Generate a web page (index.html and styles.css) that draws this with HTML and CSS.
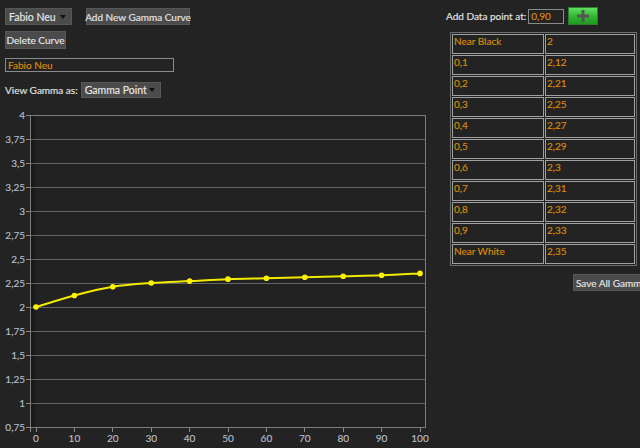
FILE: index.html
```html
<!DOCTYPE html>
<html>
<head>
<meta charset="utf-8">
<link rel="stylesheet" href="styles.css">
</head>
<body>
<div class="app">
  <div class="left">
    <div class="row row-top">
      <div class="dropdown dd-profile"><span>Fabio Neu</span><i class="arrow"></i></div>
      <div class="btn btn-add">Add New Gamma Curve</div>
    </div>
    <div class="row row-delete">
      <div class="btn btn-delete">Delete Curve</div>
    </div>
    <div class="name-input">Fabio Neu</div>
    <div class="row row-view">
      <span class="label">View Gamma as:</span>
      <div class="dropdown dd-view"><span>Gamma Point</span><i class="arrow"></i></div>
    </div>
    <svg class="chart" width="440" height="340" viewBox="0 108 440 340" xmlns="http://www.w3.org/2000/svg">
      <defs>
        <linearGradient id="shade" x1="0" x2="1" y1="0" y2="0">
          <stop offset="0" stop-color="#111" stop-opacity="0.8"/>
          <stop offset="1" stop-color="#111" stop-opacity="0"/>
        </linearGradient>
      </defs>
      <rect x="30" y="115" width="396" height="312" fill="#222"/>
      <rect x="31" y="116" width="6" height="311" fill="url(#shade)"/>
      <g class="grid">
        <line x1="31" x2="425" y1="139.5" y2="139.5"/>
        <line x1="31" x2="425" y1="163.5" y2="163.5"/>
        <line x1="31" x2="425" y1="187.5" y2="187.5"/>
        <line x1="31" x2="425" y1="211.5" y2="211.5"/>
        <line x1="31" x2="425" y1="235.5" y2="235.5"/>
        <line x1="31" x2="425" y1="259.5" y2="259.5"/>
        <line x1="31" x2="425" y1="283.5" y2="283.5"/>
        <line x1="31" x2="425" y1="307.5" y2="307.5"/>
        <line x1="31" x2="425" y1="331.5" y2="331.5"/>
        <line x1="31" x2="425" y1="355.5" y2="355.5"/>
        <line x1="31" x2="425" y1="379.5" y2="379.5"/>
        <line x1="31" x2="425" y1="403.5" y2="403.5"/>
      </g>
      <rect class="frame" x="30.5" y="115.5" width="395" height="312" fill="none"/>
      <g class="ticks">
        <line x1="26" x2="30" y1="115.5" y2="115.5"/>
        <line x1="26" x2="30" y1="139.5" y2="139.5"/>
        <line x1="26" x2="30" y1="163.5" y2="163.5"/>
        <line x1="26" x2="30" y1="187.5" y2="187.5"/>
        <line x1="26" x2="30" y1="211.5" y2="211.5"/>
        <line x1="26" x2="30" y1="235.5" y2="235.5"/>
        <line x1="26" x2="30" y1="259.5" y2="259.5"/>
        <line x1="26" x2="30" y1="283.5" y2="283.5"/>
        <line x1="26" x2="30" y1="307.5" y2="307.5"/>
        <line x1="26" x2="30" y1="331.5" y2="331.5"/>
        <line x1="26" x2="30" y1="355.5" y2="355.5"/>
        <line x1="26" x2="30" y1="379.5" y2="379.5"/>
        <line x1="26" x2="30" y1="403.5" y2="403.5"/>
        <line x1="26" x2="30" y1="427.5" y2="427.5"/>
        <line x1="30.5" x2="30.5" y1="427" y2="432"/>
        <line x1="36.5" x2="36.5" y1="428" y2="432"/>
        <line x1="74.5" x2="74.5" y1="428" y2="432"/>
        <line x1="112.5" x2="112.5" y1="428" y2="432"/>
        <line x1="151.5" x2="151.5" y1="428" y2="432"/>
        <line x1="189.5" x2="189.5" y1="428" y2="432"/>
        <line x1="228.5" x2="228.5" y1="428" y2="432"/>
        <line x1="266.5" x2="266.5" y1="428" y2="432"/>
        <line x1="304.5" x2="304.5" y1="428" y2="432"/>
        <line x1="343.5" x2="343.5" y1="428" y2="432"/>
        <line x1="381.5" x2="381.5" y1="428" y2="432"/>
        <line x1="420.5" x2="420.5" y1="428" y2="432"/>
      </g>
      <g class="ylabels">
        <text x="25" y="119">4</text>
        <text x="25" y="143">3,75</text>
        <text x="25" y="167">3,5</text>
        <text x="25" y="191">3,25</text>
        <text x="25" y="215">3</text>
        <text x="25" y="239">2,75</text>
        <text x="25" y="263">2,5</text>
        <text x="25" y="287">2,25</text>
        <text x="25" y="311">2</text>
        <text x="25" y="335">1,75</text>
        <text x="25" y="359">1,5</text>
        <text x="25" y="383">1,25</text>
        <text x="25" y="407">1</text>
        <text x="25" y="431">0,75</text>
      </g>
      <g class="xlabels">
        <text x="36" y="442">0</text>
        <text x="74.4" y="442">10</text>
        <text x="112.8" y="442">20</text>
        <text x="151.2" y="442">30</text>
        <text x="189.6" y="442">40</text>
        <text x="228" y="442">50</text>
        <text x="266.4" y="442">60</text>
        <text x="304.8" y="442">70</text>
        <text x="343.2" y="442">80</text>
        <text x="381.6" y="442">90</text>
        <text x="420" y="442">100</text>
      </g>
      <path class="curve" d="M36 307 C42.4 305.08 61.6 298.84 74.4 295.48 C87.2 292.12 100 288.92 112.8 286.84 C125.6 284.76 138.4 283.96 151.2 283 C164 282.04 176.8 281.72 189.6 281.08 C202.4 280.44 215.2 279.64 228 279.16 C240.8 278.68 253.6 278.52 266.4 278.2 C279.2 277.88 292 277.56 304.8 277.24 C317.6 276.92 330.4 276.6 343.2 276.28 C356 275.96 368.8 275.8 381.6 275.32 C394.4 274.84 413.6 273.72 420 273.4"/>
      <g class="dots">
        <circle cx="36" cy="307" r="2.8"/>
        <circle cx="74.4" cy="295.48" r="2.8"/>
        <circle cx="112.8" cy="286.84" r="2.8"/>
        <circle cx="151.2" cy="283" r="2.8"/>
        <circle cx="189.6" cy="281.08" r="2.8"/>
        <circle cx="228" cy="279.16" r="2.8"/>
        <circle cx="266.4" cy="278.2" r="2.8"/>
        <circle cx="304.8" cy="277.24" r="2.8"/>
        <circle cx="343.2" cy="276.28" r="2.8"/>
        <circle cx="381.6" cy="275.32" r="2.8"/>
        <circle cx="420" cy="273.4" r="2.8"/>
      </g>
    </svg>
  </div>
  <div class="right">
    <div class="row row-add">
      <span class="label">Add Data point at:</span>
      <div class="point-input">0,90</div>
      <div class="btn-plus"><svg width="14" height="12" viewBox="0 0 14 12"><rect x="5.5" y="0" width="3" height="12" fill="#555"/><rect x="1" y="4.5" width="12" height="3" fill="#555"/></svg></div>
    </div>
    <table class="points">
      <tr><td>Near Black</td><td>2</td></tr>
      <tr><td>0,1</td><td>2,12</td></tr>
      <tr><td>0,2</td><td>2,21</td></tr>
      <tr><td>0,3</td><td>2,25</td></tr>
      <tr><td>0,4</td><td>2,27</td></tr>
      <tr><td>0,5</td><td>2,29</td></tr>
      <tr><td>0,6</td><td>2,3</td></tr>
      <tr><td>0,7</td><td>2,31</td></tr>
      <tr><td>0,8</td><td>2,32</td></tr>
      <tr><td>0,9</td><td>2,33</td></tr>
      <tr><td>Near White</td><td>2,35</td></tr>
    </table>
    <div class="btn btn-save">Save All Gamma</div>
  </div>
</div>
</body>
</html>
```

FILE: styles.css
```css
html, body {
  margin: 0;
  padding: 0;
}
body {
  width: 640px;
  height: 448px;
  overflow: hidden;
  background: #232323;
  font-family: Lato, "Open Sans", sans-serif;
  font-size: 10px;
  color: #e4e4e4;
  -webkit-text-stroke: 0.15px;
}
.app {
  display: flex;
  width: 640px;
  height: 448px;
}
.left {
  width: 446px;
  flex: none;
}
.right {
  flex: none;
  width: 194px;
  white-space: nowrap;
}
.row {
  display: flex;
  align-items: center;
}
.btn, .dropdown {
  box-sizing: border-box;
  background: #4b4b4b;
  border: 1px solid #575757;
  color: #e6e6e6;
  display: flex;
  align-items: center;
  white-space: nowrap;
}
.dropdown {
  justify-content: space-between;
  padding: 0 5px 0 3px;
}
.arrow {
  display: block;
  width: 0;
  height: 0;
  border-left: 3px solid transparent;
  border-right: 3px solid transparent;
  border-top: 4px solid #111;
}
.row-top {
  padding: 8px 0 0 5px;
  gap: 14px;
}
.dd-profile {
  width: 67px;
  height: 17px;
  font-size: 10.5px;
}
.btn-add {
  height: 17px;
  width: 104px;
  justify-content: center;
}
.row-delete {
  padding: 6px 0 0 5px;
}
.btn-delete {
  height: 18px;
  width: 61px;
  justify-content: center;
}
.name-input {
  box-sizing: border-box;
  margin: 9px 0 0 5px;
  width: 169px;
  height: 14px;
  border: 1px solid #8a8a8a;
  color: #d98b0b;
  padding: 0 2px;
  line-height: 12px;
}
.row-view {
  padding: 10px 0 0 5px;
  gap: 3px;
}
.dd-view {
  width: 80px;
  height: 16px;
  font-size: 10.5px;
}
.chart {
  display: block;
  margin-top: 10px;
  -webkit-text-stroke: 0;
}
.chart .grid line {
  stroke: #626262;
  stroke-width: 1;
}
.chart .frame {
  stroke: #7c7c7c;
  stroke-width: 1;
}
.chart .ticks line {
  stroke: #8a8a8a;
  stroke-width: 1;
}
.chart text {
  font-family: Lato, "Open Sans", sans-serif;
  font-size: 10px;
  fill: #b4bfcc;
  stroke: #b4bfcc;
  stroke-width: 0.15px;
}
.chart .ylabels text {
  text-anchor: end;
}
.chart .xlabels text {
  text-anchor: middle;
}
.chart .curve {
  fill: none;
  stroke: #f2ea00;
  stroke-width: 2;
}
.chart .dots circle {
  fill: #fff200;
}
.row-add {
  padding-top: 7px;
  height: 18px;
}
.row-add .label {
  margin-right: 2px;
}
.point-input {
  box-sizing: border-box;
  width: 36px;
  height: 15px;
  border: 1px solid #8a8a8a;
  color: #d98b0b;
  padding: 0 2px;
  line-height: 13px;
}
.btn-plus {
  box-sizing: border-box;
  margin-left: 4px;
  width: 30px;
  height: 18px;
  border: 1px solid #2f7d2f;
  background: linear-gradient(#5fe05f, #2fb52f 55%, #1f9a1f);
  display: flex;
  align-items: center;
  justify-content: center;
}
.points {
  margin: 7px 0 0 4px;
  width: 187px;
  border-collapse: separate;
  border-spacing: 1px;
  border: 1px solid #6c6c6c;
}
.points td {
  box-sizing: border-box;
  border: 1px solid #a0a0a0;
  height: 20px;
  padding: 0 2px 0 1px;
  vertical-align: top;
  color: #d98b0b;
  line-height: 12px;
}
.points td:first-child {
  width: 92px;
}
.btn-save {
  margin: 8px 0 0 127px;
  height: 17px;
  width: 80px;
  padding: 0 2px;
}
```
